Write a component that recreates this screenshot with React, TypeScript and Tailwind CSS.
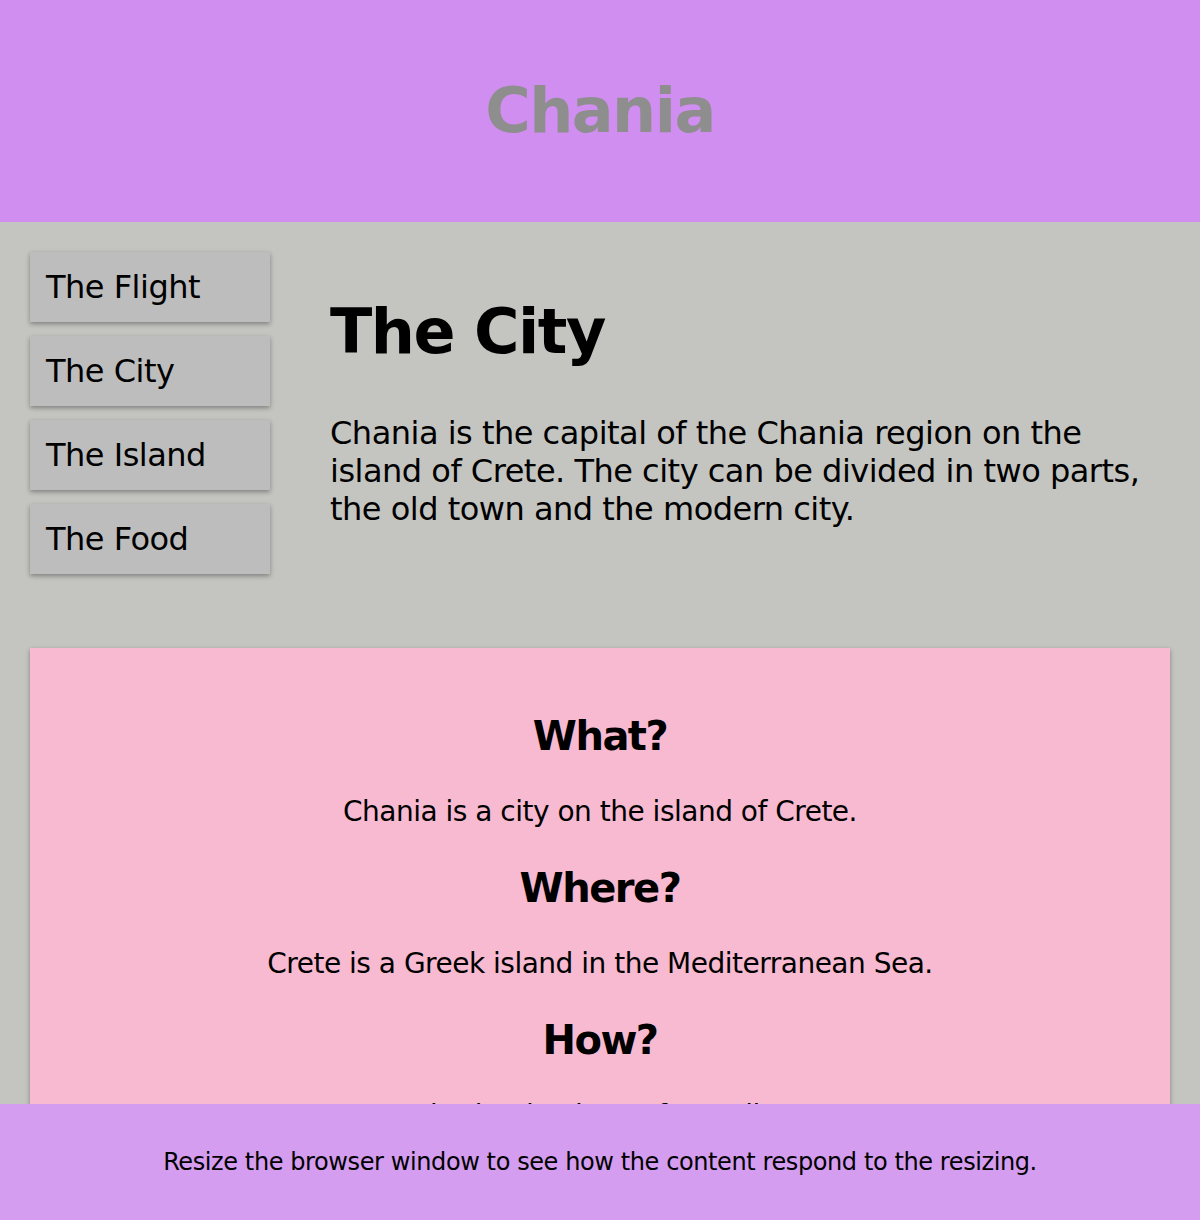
import React from 'react';

const menuItems = ['The Flight', 'The City', 'The Island', 'The Food'];

const facts = [
  { title: 'What?', text: 'Chania is a city on the island of Crete.' },
  { title: 'Where?', text: 'Crete is a Greek island in the Mediterranean Sea.' },
  { title: 'How?', text: 'You can reach Chania airport from all over Europe.' }
];

export default function App() {
  return (
    <div className="relative h-[1220px] overflow-hidden bg-[#c4c5c0] font-['DejaVu_Sans',sans-serif] text-black">
      {/* Header */}
      <header className="flex h-[222px] items-center justify-center bg-[#d08ef0]">
        <h1 className="text-[62px] leading-[74px] font-bold tracking-[-1.5px] text-[#8e8e8e]">Chania</h1>
      </header>

      {/* Menu + main column */}
      <div className="flex">
        <div className="w-[300px] shrink-0 p-[30px]">
          <ul>
            {menuItems.map((item) => (
              <li
                key={item}
                className="mb-[14px] bg-[#bdbdbd] p-[16px] text-[32px] leading-[38px] tracking-[-0.5px] shadow-[0_2px_6px_rgba(0,0,0,0.12),0_2px_4px_rgba(0,0,0,0.24)]"
              >
                {item}
              </li>
            ))}
          </ul>
        </div>
        <div className="flex-1 p-[30px]">
          <h1 className="mt-[43px] mb-[45px] text-[62px] leading-[74px] font-bold tracking-[-1.5px]">The City</h1>
          <p className="mb-[32px] text-[32px] leading-[38px] tracking-[-0.5px]">
            Chania is the capital of the Chania region on the island of Crete. The city can be divided in two parts, the old town and the modern city.
          </p>
        </div>
      </div>

      {/* Aside */}
      <div className="p-[30px]">
        <div className="bg-[#f8bad0] p-[30px] text-center shadow-[0_2px_6px_rgba(0,0,0,0.12),0_2px_4px_rgba(0,0,0,0.24)]">
          {facts.map((fact) => (
            <div key={fact.title}>
              <h2 className="mt-[34px] mb-[34px] text-[40px] leading-[49px] font-bold tracking-[-1.5px]">{fact.title}</h2>
              <p className="mb-[36px] text-[28px] leading-[33px] tracking-[-0.5px]">{fact.text}</p>
            </div>
          ))}
        </div>
      </div>

      {/* Footer */}
      <footer className="absolute right-0 bottom-0 left-0 flex h-[116px] items-center justify-center bg-[#d49df0]">
        <p className="text-[24px] leading-[28px] tracking-[-0.4px]">
          Resize the browser window to see how the content respond to the resizing.
        </p>
      </footer>
    </div>
  );
}
